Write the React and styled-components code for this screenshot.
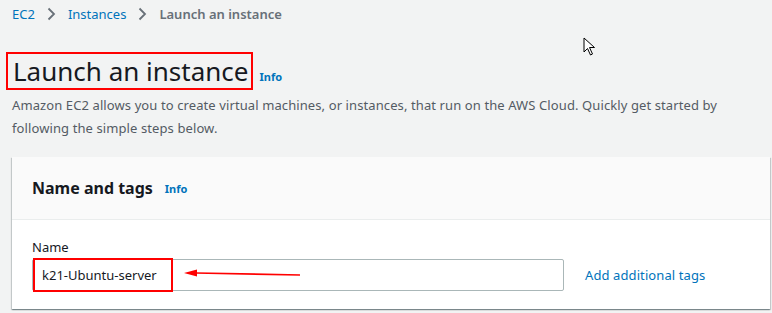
import styled, { createGlobalStyle } from 'styled-components';

const GlobalStyle = createGlobalStyle`
  html, body {
    margin: 0;
    padding: 0;
    background: #f2f3f3;
    font-family: 'Noto Sans', 'Open Sans', Arial, sans-serif;
    overflow: hidden;
  }
`;

const Page = styled.div`
  position: relative;
  width: 772px;
  height: 313px;
  padding-left: 12px;
  box-sizing: border-box;
`;

const Crumbs = styled.nav`
  display: flex;
  align-items: center;
  gap: 12px;
  height: 28px;
  font-size: 13px;
  color: #545b64;
`;

const CrumbLink = styled.span`
  color: #0073bb;
`;

const CrumbCurrent = styled.span`
  color: #687078;
  font-weight: 600;
`;

const Chevron = () => (
  <svg width="9" height="14" viewBox="0 0 9 14">
    <path d="M1.5 1.5 L7 7 L1.5 12.5" fill="none" stroke="#687078" strokeWidth="1.8" />
  </svg>
);

const TitleRow = styled.div`
  display: flex;
  align-items: flex-end;
  gap: 6px;
  margin-top: 24px;
  margin-left: -6px;
`;

const Marked = styled.div`
  border: 2px solid #ff0000;
  padding: ${(p) => p.$pad || '0 3px'};
  box-sizing: border-box;
`;

const Title = styled.h1`
  margin: 0;
  font-size: 26px;
  line-height: 34px;
  font-weight: 400;
  color: #16191f;
`;

const Info = styled.span`
  font-size: 11px;
  font-weight: 700;
  color: #0073bb;
  margin-bottom: ${(p) => p.$mb || '0'};
`;

const Description = styled.p`
  margin: 4px 0 0;
  width: 740px;
  font-size: 13px;
  letter-spacing: 0.1px;
  line-height: 23px;
  color: #545b64;
`;

const Card = styled.section`
  margin-top: 17px;
  margin-right: 2px;
  background: #fff;
  box-shadow: 0 1px 1px rgba(0, 28, 36, 0.3), 1px 1px 1px rgba(0, 28, 36, 0.15), -1px 1px 1px rgba(0, 28, 36, 0.15);
`;

const CardHeader = styled.header`
  display: flex;
  align-items: center;
  gap: 12px;
  height: 62px;
  padding: 0 20px;
  background: #fafafa;
  border-bottom: 1px solid #eaeded;
`;

const CardTitle = styled.h2`
  margin: 0;
  font-size: 16px;
  font-weight: 700;
  color: #16191f;
`;

const CardBody = styled.div`
  padding: 18px 20px 18px;
`;

const Label = styled.label`
  display: block;
  font-size: 13px;
  line-height: 18px;
  color: #16191f;
  margin-bottom: 3px;
`;

const FieldRow = styled.div`
  position: relative;
  display: flex;
  align-items: center;
  gap: 21px;
`;

const InputBox = styled.div`
  width: 532px;
  height: 32px;
  box-sizing: border-box;
  border: 1px solid #aab7b8;
  border-radius: 2px;
  background: #fff;
  display: flex;
  align-items: center;
`;

const InputText = styled.span`
  font-size: 13px;
  line-height: 30px;
  color: #16191f;
`;

const TagLink = styled.span`
  font-size: 13px;
  letter-spacing: 0.1px;
  color: #0073bb;
`;

const Arrow = styled.svg`
  position: absolute;
  left: 150px;
  top: 8px;
`;

const Cursor = styled.svg`
  position: absolute;
  left: 583px;
  top: 37px;
`;

export default function App() {
  return (
    <>
      <GlobalStyle />
      <Page>
        <Crumbs>
          <CrumbLink>EC2</CrumbLink>
          <Chevron />
          <CrumbLink>Instances</CrumbLink>
          <Chevron />
          <CrumbCurrent>Launch an instance</CrumbCurrent>
        </Crumbs>
        <TitleRow>
          <Marked $pad="0 3px 0 5px">
            <Title>Launch an instance</Title>
          </Marked>
          <Info $mb="6px">Info</Info>
        </TitleRow>
        <Description>
          Amazon EC2 allows you to create virtual machines, or instances, that run on the AWS Cloud. Quickly get started by
          following the simple steps below.
        </Description>
        <Card>
          <CardHeader>
            <CardTitle>Name and tags</CardTitle>
            <Info>Info</Info>
          </CardHeader>
          <CardBody>
            <Label>Name</Label>
            <FieldRow>
              <InputBox>
                <Marked $pad="0 14px 0 7px">
                  <InputText>k21-Ubuntu-server</InputText>
                </Marked>
              </InputBox>
              <TagLink>Add additional tags</TagLink>
              <Arrow width="120" height="14" viewBox="0 0 120 14">
                <path d="M118 8 L14 6" stroke="#ff0000" strokeWidth="1.6" fill="none" />
                <path d="M2 6 L15 2.5 L15 9.5 Z" fill="#ff0000" />
              </Arrow>
            </FieldRow>
          </CardBody>
        </Card>
        <Cursor width="14" height="20" viewBox="0 0 14 20">
          <path d="M1 1 L1 15 L4.5 11.5 L7.5 18 L9.5 17 L6.5 10.5 L11.5 10.5 Z" fill="#fff" stroke="#000" strokeWidth="1" />
        </Cursor>
      </Page>
    </>
  );
}
